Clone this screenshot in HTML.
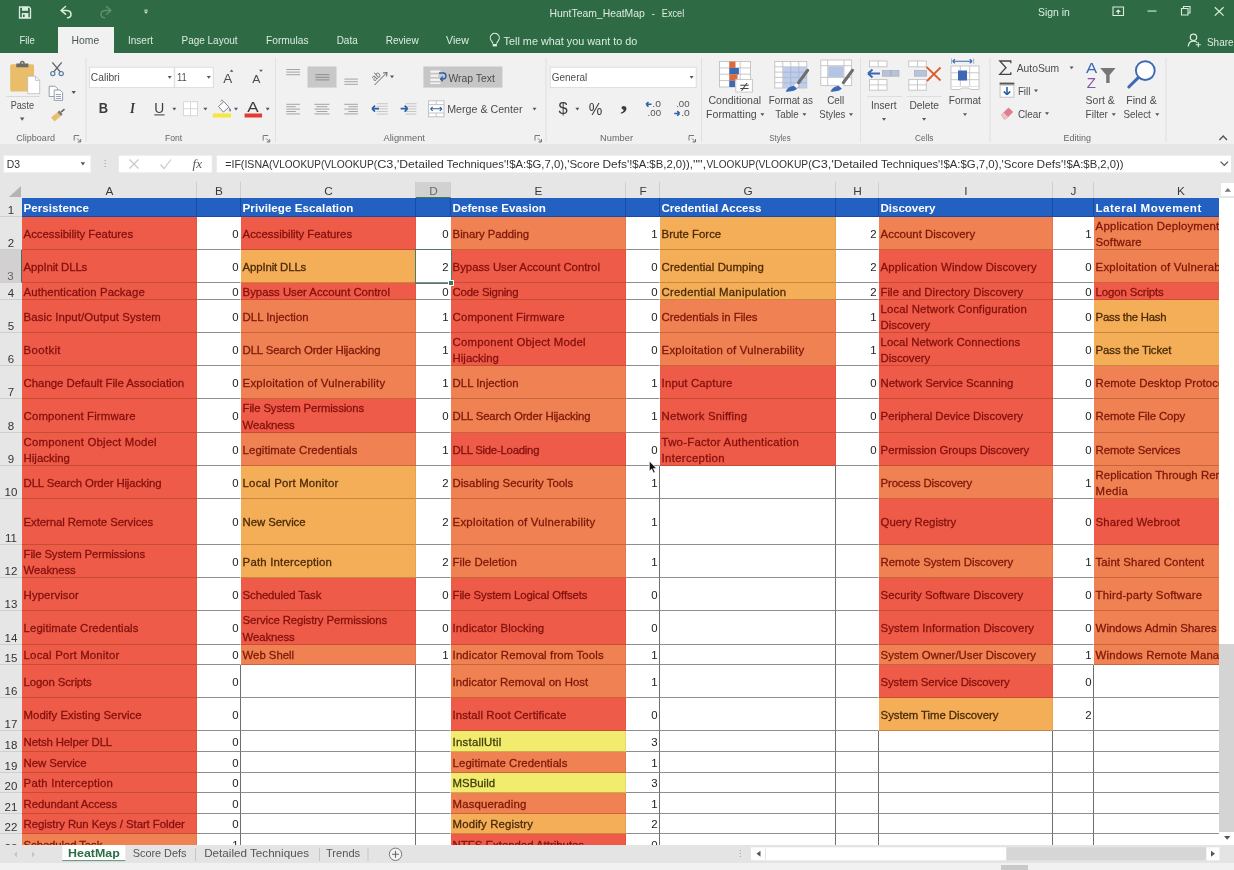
<!DOCTYPE html>
<html><head><meta charset="utf-8"><title>HuntTeam_HeatMap - Excel</title>
<style>
*{box-sizing:border-box;margin:0;padding:0}
html,body{width:1234px;height:870px;overflow:hidden;background:#f1f1f1;font-family:"Liberation Sans",sans-serif;}
.abs{position:absolute;will-change:transform}
#title{left:0;top:0;width:1234px;height:53px;background:#2c6b45}
#title .t{position:absolute;color:#fff;font-size:11.5px;white-space:nowrap}
#hometab{left:58px;top:27px;width:56px;height:27px;background:#f1f1f1}
#ribbon{left:0;top:53px;width:1234px;height:95px;background:#f1f1f1}
.rl{position:absolute;font-size:11px;color:#444;white-space:nowrap}
.gl{position:absolute;font-size:10.5px;color:#555;white-space:nowrap;top:132px}
.vsep{position:absolute;top:58px;width:1px;height:84px;background:#dcdcdc}
#fbar{left:0;top:148px;width:1234px;height:34px;background:#e9e9e9}
#grid{left:0;top:182px;width:1234px;height:663px;background:#fff;overflow:hidden}
.c{position:absolute;overflow:hidden;font-size:11.4px;white-space:nowrap;border-right:1px solid #6e6e6e;border-bottom:1px solid #8e8e8e;display:flex;align-items:center}
.c.cf{border-bottom-color:rgba(110,40,0,.3);border-right-color:rgba(100,0,0,.08)}
.c.nr{border-right-color:transparent}
.c.t span{padding-left:1.6px;line-height:16.5px;position:relative;top:1px;-webkit-text-stroke:0.3px currentColor}
.c.n{justify-content:flex-end;color:#222}
.c.n span{padding-right:1.5px;position:relative;top:0.75px}
.c.h{font-weight:700;font-size:11.6px;border-color:#1b4aa6}
.c.h span{padding-left:1.5px}
.c i{font-style:normal}
.ch{position:absolute;top:0;height:16px;font-size:11.8px;color:#3a3a3a;text-align:center;line-height:18.5px;padding-left:1px;border-right:1px solid #cfcfcf}
.rh{position:absolute;left:0;width:22px;font-size:11.5px;color:#333;text-align:center;border-bottom:1px solid #cfcfcf;display:flex;align-items:flex-end;justify-content:center}
</style></head><body>
<svg class="abs" style="left:0;top:0" width="1234" height="182" viewBox="0 0 1234 182">
<rect x="0" y="0" width="1234" height="53" fill="#2e6b45" />
<rect x="0" y="53" width="1234" height="91" fill="#f1f1f1" />
<rect x="0" y="144" width="1234" height="38" fill="#e6e6e6" />
<rect x="58" y="27" width="56" height="27" fill="#f1f1f1" />
<path d="M19.5 7 H29 L30.5 8.5 V18 H19.5 Z" fill="none" stroke="#dcecdf" stroke-width="1.3" />
<rect x="22" y="7" width="6" height="3.8" fill="#dcecdf" />
<rect x="21.8" y="13" width="6.6" height="5" fill="#dcecdf" />
<rect x="23" y="14.5" width="1.6" height="2.5" fill="#2e6b45" />
<path d="M61 10.5 L65.5 6.5 M61 10.5 L65.5 14.2 M61 10.5 H67 Q71 10.8 71 14.5 Q71 17.5 67.5 17.8" fill="none" stroke="#dcecdf" stroke-width="1.5" stroke-linecap="round" stroke-linejoin="round"/>
<path d="M111 10.5 L106.5 6.5 M111 10.5 L106.5 14.2 M111 10.5 H105 Q101 10.8 101 14.5 Q101 17.5 104.5 17.8" fill="none" stroke="#5f8f72" stroke-width="1.4" stroke-linecap="round" stroke-linejoin="round"/>
<rect x="144.3" y="9.6" width="3.4" height="1" fill="#dcecdf" />
<path d="M144 11.5 H148 L146 13.8 Z" fill="#dcecdf" />
<text x="549.5" y="17" font-family="Liberation Sans" font-size="10.4" fill="#dcecdf" font-weight="400" text-anchor="start" textLength="95.3" lengthAdjust="spacingAndGlyphs" >HuntTeam_HeatMap</text>
<text x="651.5" y="17" font-family="Liberation Sans" font-size="10.4" fill="#dcecdf" font-weight="400" text-anchor="start" >-</text>
<text x="661.8" y="17" font-family="Liberation Sans" font-size="10.4" fill="#dcecdf" font-weight="400" text-anchor="start" textLength="22.4" lengthAdjust="spacingAndGlyphs" >Excel</text>
<text x="1038" y="15.6" font-family="Liberation Sans" font-size="10.4" fill="#dcecdf" font-weight="400" text-anchor="start" textLength="31.8" lengthAdjust="spacingAndGlyphs" >Sign in</text>
<path d="M1113 7 H1123.5 V15.5 H1113 Z" fill="none" stroke="#dcecdf" stroke-width="1.1" />
<path d="M1118.2 9.2 L1120.8 12 H1115.6 Z" fill="#dcecdf" />
<rect x="1117.6" y="11.5" width="1.2" height="2.6" fill="#dcecdf" />
<rect x="1147.5" y="10.5" width="9" height="1.1" fill="#dcecdf" />
<path d="M1181.5 8.5 H1188 V15 H1181.5 Z" fill="none" stroke="#dcecdf" stroke-width="1.1" />
<path d="M1183.5 8.5 V6.5 H1190 V13 H1188" fill="none" stroke="#dcecdf" stroke-width="1.1" />
<path d="M1214.8 7.2 L1223.6 15.6 M1223.6 7.2 L1214.8 15.6" fill="none" stroke="#dcecdf" stroke-width="1.2" />
<text x="19.4" y="44.3" font-family="Liberation Sans" font-size="10.4" fill="#dcecdf" font-weight="400" text-anchor="start" textLength="15.4" lengthAdjust="spacingAndGlyphs" >File</text>
<text x="71.6" y="44.3" font-family="Liberation Sans" font-size="10.4" fill="#4a5a50" font-weight="400" text-anchor="start" textLength="27.6" lengthAdjust="spacingAndGlyphs" >Home</text>
<text x="128" y="44.3" font-family="Liberation Sans" font-size="10.4" fill="#dcecdf" font-weight="400" text-anchor="start" textLength="25" lengthAdjust="spacingAndGlyphs" >Insert</text>
<text x="181.5" y="44.3" font-family="Liberation Sans" font-size="10.4" fill="#dcecdf" font-weight="400" text-anchor="start" textLength="56" lengthAdjust="spacingAndGlyphs" >Page Layout</text>
<text x="266" y="44.3" font-family="Liberation Sans" font-size="10.4" fill="#dcecdf" font-weight="400" text-anchor="start" textLength="42.5" lengthAdjust="spacingAndGlyphs" >Formulas</text>
<text x="336.7" y="44.3" font-family="Liberation Sans" font-size="10.4" fill="#dcecdf" font-weight="400" text-anchor="start" textLength="21" lengthAdjust="spacingAndGlyphs" >Data</text>
<text x="385.7" y="44.3" font-family="Liberation Sans" font-size="10.4" fill="#dcecdf" font-weight="400" text-anchor="start" textLength="33" lengthAdjust="spacingAndGlyphs" >Review</text>
<text x="446" y="44.3" font-family="Liberation Sans" font-size="10.4" fill="#dcecdf" font-weight="400" text-anchor="start" textLength="22.8" lengthAdjust="spacingAndGlyphs" >View</text>
<path d="M492.9 43.8 Q492.7 42.2 491.4 40.8 A4.5 4.5 0 1 1 498.2 40.8 Q496.9 42.2 496.7 43.8" fill="none" stroke="#dcecdf" stroke-width="1.1" />
<rect x="492.7" y="44" width="4.2" height="2.4" fill="#dcecdf" />
<text x="503.6" y="45" font-family="Liberation Sans" font-size="10.4" fill="#dcecdf" font-weight="400" text-anchor="start" textLength="133.7" lengthAdjust="spacingAndGlyphs" >Tell me what you want to do</text>
<circle cx="1193.5" cy="37.3" r="3.2" fill="none" stroke="#dcecdf" stroke-width="1.2"/>
<path d="M1188.3 46.5 Q1188.5 41.2 1193.5 41.2 Q1196 41.2 1197.2 42.6" fill="none" stroke="#dcecdf" stroke-width="1.2" />
<path d="M1198.3 42.2 V47.2 M1195.8 44.7 H1200.8" fill="none" stroke="#dcecdf" stroke-width="1.1" />
<text x="1207" y="45.5" font-family="Liberation Sans" font-size="10.4" fill="#dcecdf" font-weight="400" text-anchor="start" textLength="26.5" lengthAdjust="spacingAndGlyphs" >Share</text>
<rect x="85.5" y="58" width="1" height="84" fill="#e0e0e0" />
<rect x="275" y="58" width="1" height="84" fill="#e0e0e0" />
<rect x="545.5" y="58" width="1" height="84" fill="#e0e0e0" />
<rect x="701" y="58" width="1" height="84" fill="#e0e0e0" />
<rect x="860" y="58" width="1" height="84" fill="#e0e0e0" />
<rect x="989.5" y="58" width="1" height="84" fill="#e0e0e0" />
<rect x="1165.5" y="58" width="1" height="84" fill="#e0e0e0" />
<rect x="10.2" y="64.2" width="23.8" height="27.2" fill="#e9bd6a" rx="1.5"/>
<path d="M16.3 67.2 V63.6 H19.8 Q20 60.8 22.3 60.8 Q24.6 60.8 24.8 63.6 H28.4 V67.2 Z" fill="#6a6a6a" />
<circle cx="22.3" cy="63" r="1" fill="#e9bd6a"/>
<path d="M27.7 76.2 H35.5 L39.7 80.4 V93.7 H27.7 Z" fill="#fff" stroke="#b9b9b9" stroke-width="0.8" />
<path d="M35.5 76.2 V80.4 H39.7" fill="none" stroke="#b9b9b9" stroke-width="0.8" />
<rect x="6.4" y="96" width="33.3" height="1" fill="#d8d8d8" />
<text x="10.7" y="109.1" font-family="Liberation Sans" font-size="10.5" fill="#4c4c4c" font-weight="400" text-anchor="start" textLength="23.3" lengthAdjust="spacingAndGlyphs" >Paste</text>
<path d="M20.0 117.60000000000001 L24.4 117.60000000000001 L22.2 120.68 Z" fill="#555" />
<path d="M52.3 62.3 L60.3 72 M61.7 62.3 L53.7 72" fill="none" stroke="#5f6670" stroke-width="1.3" />
<circle cx="52.8" cy="73.6" r="2.1" fill="none" stroke="#5b78a8" stroke-width="1.2"/>
<circle cx="61.2" cy="73.6" r="2.1" fill="none" stroke="#5b78a8" stroke-width="1.2"/>
<path d="M49.2 86.2 H55 L57.5 88.7 V96.5 H49.2 Z" fill="#fdfdfd" stroke="#8d93a0" stroke-width="0.9" />
<path d="M54.2 90 H60 L62.6 92.6 V100.4 H54.2 Z" fill="#fdfdfd" stroke="#8d93a0" stroke-width="0.9" />
<path d="M55.8 94.5 H61 M55.8 96.5 H61 M55.8 98.5 H61" fill="none" stroke="#7c8fb5" stroke-width="0.8" />
<path d="M71.5 90.9 L75.9 90.9 L73.7 93.98 Z" fill="#555" />
<path d="M51 117.5 L57.5 112.2 L61 116 L54.5 121.5 Z" fill="#e9bd6a" />
<path d="M57.5 112.2 L59.3 110.6 L62.6 114.3 L61 116 Z" fill="#777" />
<path d="M61 112.2 L64.5 109.2" fill="none" stroke="#666" stroke-width="1.6" />
<text x="16.3" y="141.2" font-family="Liberation Sans" font-size="9.2" fill="#666" font-weight="400" text-anchor="start" textLength="38.6" lengthAdjust="spacingAndGlyphs" >Clipboard</text>
<path d="M74.2 140.5 L74.2 135.5 L79.2 135.5" fill="none" stroke="#777" stroke-width="1" />
<path d="M77.2 138.5 L80.7 142.0 M80.7 139.0 L80.7 142.0 L77.7 142.0" fill="none" stroke="#777" stroke-width="1" />
<rect x="89.6" y="67.2" width="84.7" height="20.4" fill="#fff" stroke="#dcdcdc" stroke-width="1"/>
<rect x="174.7" y="67.2" width="38.6" height="20.4" fill="#fff" stroke="#dcdcdc" stroke-width="1"/>
<text x="90.8" y="81.2" font-family="Liberation Sans" font-size="10.3" fill="#4c4c4c" font-weight="400" text-anchor="start" textLength="29" lengthAdjust="spacingAndGlyphs" >Calibri</text>
<path d="M167.7 75.9 L171.7 75.9 L169.7 78.7 Z" fill="#555" />
<text x="177" y="81.2" font-family="Liberation Sans" font-size="10.3" fill="#4c4c4c" font-weight="400" text-anchor="start" textLength="9.8" lengthAdjust="spacingAndGlyphs" >11</text>
<path d="M206.8 75.9 L210.8 75.9 L208.8 78.7 Z" fill="#555" />
<text x="223.3" y="82.6" font-family="Liberation Sans" font-size="12.5" fill="#4c4c4c" font-weight="400" text-anchor="start" textLength="9" lengthAdjust="spacingAndGlyphs" >A</text>
<path d="M229.8 71.8 L231.6 69.6 L233.4 71.8 Z" fill="#555" />
<text x="252.3" y="82.6" font-family="Liberation Sans" font-size="11.2" fill="#4c4c4c" font-weight="400" text-anchor="start" textLength="8.2" lengthAdjust="spacingAndGlyphs" >A</text>
<path d="M259.2 69.8 L262.8 69.8 L261 72 Z" fill="#555" />
<text x="98.7" y="113" font-family="Liberation Sans" font-size="15.2" fill="#3c3c3c" font-weight="700" text-anchor="start" textLength="9.3" lengthAdjust="spacingAndGlyphs" >B</text>
<text x="130" y="113" font-family="Liberation Serif" font-size="15.2" fill="#3c3c3c" font-weight="700" text-anchor="start" textLength="5" lengthAdjust="spacingAndGlyphs" font-style="italic">I</text>
<text x="154.3" y="112.6" font-family="Liberation Sans" font-size="14.6" fill="#3c3c3c" font-weight="400" text-anchor="start" textLength="10" lengthAdjust="spacingAndGlyphs" >U</text>
<rect x="154.3" y="114.4" width="10.2" height="1" fill="#3c3c3c" />
<path d="M172.3 107.7 L176.3 107.7 L174.3 110.5 Z" fill="#555" />
<rect x="183.5" y="101.7" width="14" height="14" fill="#fff" stroke="#d8d8d8" stroke-width="1"/>
<path d="M190.5 101.7 V115.7 M183.5 108.7 H197.5" fill="none" stroke="#d8d8d8" stroke-width="1" />
<path d="M203.4 107.7 L207.4 107.7 L205.4 110.5 Z" fill="#555" />
<path d="M218.5 106.5 L223.8 101.6 L229 107.2 L223.4 112 Z" fill="#fdfdfd" stroke="#777" stroke-width="0.9" />
<path d="M220.5 101.2 Q221.5 99.2 223.4 101.2" fill="none" stroke="#777" stroke-width="0.9" />
<path d="M229.6 107.5 Q231.8 110.5 230.3 111.6 Q228.6 111.6 229.6 107.5 Z" fill="#4d6fa3" />
<rect x="212.8" y="113.5" width="18.2" height="4" fill="#f5e73c" />
<path d="M234 107.7 L238 107.7 L236 110.5 Z" fill="#555" />
<text x="247.3" y="112.3" font-family="Liberation Sans" font-size="14.2" fill="#3c3c3c" font-weight="400" text-anchor="start" textLength="11.4" lengthAdjust="spacingAndGlyphs" >A</text>
<rect x="244.6" y="113.5" width="17.4" height="4" fill="#e53935" />
<path d="M265.7 107.7 L269.7 107.7 L267.7 110.5 Z" fill="#555" />
<text x="165" y="141.2" font-family="Liberation Sans" font-size="9.2" fill="#666" font-weight="400" text-anchor="start" textLength="17.2" lengthAdjust="spacingAndGlyphs" >Font</text>
<path d="M263.2 140.5 L263.2 135.5 L268.2 135.5" fill="none" stroke="#777" stroke-width="1" />
<path d="M266.2 138.5 L269.7 142.0 M269.7 139.0 L269.7 142.0 L266.7 142.0" fill="none" stroke="#777" stroke-width="1" />
<rect x="286.3" y="69.0" width="13.8" height="1" fill="#a4a4a4" />
<rect x="286.3" y="71.6" width="13.8" height="1" fill="#a4a4a4" />
<rect x="286.3" y="74.2" width="13.8" height="1" fill="#a4a4a4" />
<rect x="307.5" y="66.5" width="29" height="21.1" fill="#c8c8c8" />
<rect x="315.4" y="74.2" width="14" height="1" fill="#8a8a8a" />
<rect x="315.4" y="76.8" width="14" height="1" fill="#8a8a8a" />
<rect x="315.4" y="79.4" width="14" height="1" fill="#8a8a8a" />
<rect x="344.3" y="78.6" width="13.6" height="1" fill="#a4a4a4" />
<rect x="344.3" y="81.2" width="13.6" height="1" fill="#a4a4a4" />
<rect x="344.3" y="83.8" width="13.6" height="1" fill="#a4a4a4" />
<text x="372" y="79.5" font-family="Liberation Sans" font-size="9.5" fill="#666" font-weight="400" text-anchor="start" textLength="9" lengthAdjust="spacingAndGlyphs" transform="rotate(-40 376 77)">ab</text>
<path d="M374.5 85 L387 72.5 M387 72.5 L383 73 M387 72.5 L386.6 76.5" fill="none" stroke="#666" stroke-width="1" />
<path d="M390 75.5 L394 75.5 L392 78.3 Z" fill="#555" />
<rect x="423.4" y="66.5" width="79" height="21.1" fill="#c6c6c6" />
<rect x="430.4" y="70.5" width="10" height="2.2" fill="#f4f4f4" />
<rect x="430.4" y="74.6" width="8" height="2.2" fill="#f4f4f4" />
<rect x="430.4" y="78.7" width="10" height="2.2" fill="#f4f4f4" />
<rect x="430.4" y="82.5" width="10" height="1.5" fill="#f4f4f4" />
<path d="M439 73 H443.5 Q446 73.2 446 76 Q446 79 443 79 H441 M442.8 76.8 L440.6 79 L442.8 81.2" fill="none" stroke="#2f5fa8" stroke-width="1.4" />
<text x="448.4" y="81.6" font-family="Liberation Sans" font-size="10.3" fill="#4c4c4c" font-weight="400" text-anchor="start" textLength="46.5" lengthAdjust="spacingAndGlyphs" >Wrap Text</text>
<rect x="286.3" y="103.8" width="13.6" height="1" fill="#a4a4a4" />
<rect x="286.3" y="106.2" width="9.5" height="1" fill="#a4a4a4" />
<rect x="286.3" y="108.6" width="13.6" height="1" fill="#a4a4a4" />
<rect x="286.3" y="111.0" width="9.5" height="1" fill="#a4a4a4" />
<rect x="286.3" y="113.4" width="13.6" height="1" fill="#a4a4a4" />
<rect x="314.4" y="103.8" width="15" height="1" fill="#a4a4a4" />
<rect x="316.4" y="106.2" width="11" height="1" fill="#a4a4a4" />
<rect x="314.4" y="108.6" width="15" height="1" fill="#a4a4a4" />
<rect x="316.4" y="111.0" width="11" height="1" fill="#a4a4a4" />
<rect x="314.4" y="113.4" width="15" height="1" fill="#a4a4a4" />
<rect x="344.3" y="103.8" width="13.6" height="1" fill="#a4a4a4" />
<rect x="348.4" y="106.2" width="9.5" height="1" fill="#a4a4a4" />
<rect x="344.3" y="108.6" width="13.6" height="1" fill="#a4a4a4" />
<rect x="348.4" y="111.0" width="9.5" height="1" fill="#a4a4a4" />
<rect x="344.3" y="113.4" width="13.6" height="1" fill="#a4a4a4" />
<rect x="376.7" y="103.2" width="11" height="1" fill="#c6c6c6" />
<rect x="376.7" y="105.8" width="11" height="1" fill="#c6c6c6" />
<rect x="376.7" y="108.4" width="11" height="1" fill="#c6c6c6" />
<rect x="376.7" y="111.0" width="11" height="1" fill="#c6c6c6" />
<rect x="376.7" y="113.6" width="11" height="1" fill="#c6c6c6" />
<path d="M372 108.6 H379 M372 108.6 L375 105.6 M372 108.6 L375 111.6" fill="none" stroke="#2f5fa8" stroke-width="1.6" />
<rect x="405.5" y="103.2" width="11" height="1" fill="#c6c6c6" />
<rect x="405.5" y="105.8" width="11" height="1" fill="#c6c6c6" />
<rect x="405.5" y="108.4" width="11" height="1" fill="#c6c6c6" />
<rect x="405.5" y="111.0" width="11" height="1" fill="#c6c6c6" />
<rect x="405.5" y="113.6" width="11" height="1" fill="#c6c6c6" />
<path d="M400.6 108.6 H407.6 M407.6 108.6 L404.6 105.6 M407.6 108.6 L404.6 111.6" fill="none" stroke="#2f5fa8" stroke-width="1.6" />
<rect x="428.5" y="100.8" width="15.5" height="16" fill="#fff" stroke="#bdbdbd" stroke-width="0.9"/>
<path d="M428.5 104.6 H444 M428.5 113 H444 M436.2 100.8 V104.6 M436.2 113 V116.8" fill="none" stroke="#bdbdbd" stroke-width="0.9" />
<path d="M430.5 108.8 H442 M430.5 108.8 L432.7 106.8 M430.5 108.8 L432.7 110.8 M442 108.8 L439.8 106.8 M442 108.8 L439.8 110.8" fill="none" stroke="#2f5fa8" stroke-width="1.1" />
<text x="447.2" y="113.4" font-family="Liberation Sans" font-size="10.3" fill="#4c4c4c" font-weight="400" text-anchor="start" textLength="75.3" lengthAdjust="spacingAndGlyphs" >Merge &amp; Center</text>
<path d="M532.5 107.7 L536.5 107.7 L534.5 110.5 Z" fill="#555" />
<text x="383.6" y="141.2" font-family="Liberation Sans" font-size="9.2" fill="#666" font-weight="400" text-anchor="start" textLength="41.3" lengthAdjust="spacingAndGlyphs" >Alignment</text>
<path d="M535 140.5 L535 135.5 L540 135.5" fill="none" stroke="#777" stroke-width="1" />
<path d="M538 138.5 L541.5 142.0 M541.5 139.0 L541.5 142.0 L538.5 142.0" fill="none" stroke="#777" stroke-width="1" />
<rect x="550.2" y="67.2" width="146" height="20.4" fill="#fff" stroke="#dcdcdc" stroke-width="1"/>
<text x="551.8" y="81.2" font-family="Liberation Sans" font-size="10.3" fill="#4c4c4c" font-weight="400" text-anchor="start" textLength="35.4" lengthAdjust="spacingAndGlyphs" >General</text>
<path d="M689.6 75.9 L693.6 75.9 L691.6 78.7 Z" fill="#555" />
<text x="558.6" y="114" font-family="Liberation Sans" font-size="16.5" fill="#3c3c3c" font-weight="400" text-anchor="start" textLength="9.2" lengthAdjust="spacingAndGlyphs" >$</text>
<path d="M575.4 107.7 L579.4 107.7 L577.4 110.5 Z" fill="#555" />
<text x="588.8" y="114.6" font-family="Liberation Sans" font-size="16" fill="#3c3c3c" font-weight="400" text-anchor="start" textLength="13.6" lengthAdjust="spacingAndGlyphs" >%</text>
<text x="620.5" y="110" font-family="Liberation Serif" font-size="26" fill="#3c3c3c" font-weight="700" text-anchor="start" textLength="7" lengthAdjust="spacingAndGlyphs" >,</text>
<path d="M646 104.3 H651.5 M646 104.3 L648.5 102 M646 104.3 L648.5 106.6" fill="none" stroke="#2f5fa8" stroke-width="1.5" />
<text x="652.3" y="107.2" font-family="Liberation Sans" font-size="8.8" fill="#555" font-weight="400" text-anchor="start" textLength="8.6" lengthAdjust="spacingAndGlyphs" >.0</text>
<text x="647.6" y="116.2" font-family="Liberation Sans" font-size="8.8" fill="#555" font-weight="400" text-anchor="start" textLength="13.4" lengthAdjust="spacingAndGlyphs" >.00</text>
<text x="676.2" y="107.2" font-family="Liberation Sans" font-size="8.8" fill="#555" font-weight="400" text-anchor="start" textLength="13.4" lengthAdjust="spacingAndGlyphs" >.00</text>
<path d="M674.2 113.4 H679.7 M679.7 113.4 L677.2 111.1 M679.7 113.4 L677.2 115.7" fill="none" stroke="#2f5fa8" stroke-width="1.5" />
<text x="681.2" y="116.2" font-family="Liberation Sans" font-size="8.8" fill="#555" font-weight="400" text-anchor="start" textLength="8.6" lengthAdjust="spacingAndGlyphs" >.0</text>
<text x="600.1" y="141.2" font-family="Liberation Sans" font-size="9.2" fill="#666" font-weight="400" text-anchor="start" textLength="32.9" lengthAdjust="spacingAndGlyphs" >Number</text>
<path d="M689 140.5 L689 135.5 L694 135.5" fill="none" stroke="#777" stroke-width="1" />
<path d="M692 138.5 L695.5 142.0 M695.5 139.0 L695.5 142.0 L692.5 142.0" fill="none" stroke="#777" stroke-width="1" />
<rect x="719.5" y="61.5" width="31" height="25.5" fill="#fff" stroke="#c2c2c2" stroke-width="0.9"/>
<path d="M729.8 61.5 V87.0 M740.2 61.5 V87.0 M719.5 67.9 H750.5 M719.5 74.2 H750.5 M719.5 80.6 H750.5 " fill="none" stroke="#c2c2c2" stroke-width="0.9" />
<rect x="729.3" y="61.5" width="6.2" height="6.4" fill="#dd6a3c" />
<rect x="729.3" y="67.9" width="9.6" height="6.4" fill="#3c68b4" />
<rect x="729.3" y="74.3" width="8.2" height="6.4" fill="#dd6a3c" />
<rect x="729.3" y="80.7" width="5.8" height="6.3" fill="#3c68b4" />
<rect x="735.8" y="79.5" width="16.6" height="12.6" fill="#fdfdfd" stroke="#c4c4c4" stroke-width="0.9"/>
<text x="739.6" y="90.6" font-family="Liberation Sans" font-size="13" fill="#444" font-weight="400" text-anchor="start" textLength="9.4" lengthAdjust="spacingAndGlyphs" >≠</text>
<text x="708.4" y="104.4" font-family="Liberation Sans" font-size="10.3" fill="#4c4c4c" font-weight="400" text-anchor="start" textLength="52.8" lengthAdjust="spacingAndGlyphs" >Conditional</text>
<text x="706.1" y="118.1" font-family="Liberation Sans" font-size="10.3" fill="#4c4c4c" font-weight="400" text-anchor="start" textLength="50.6" lengthAdjust="spacingAndGlyphs" >Formatting</text>
<path d="M760.4 113.3 L764.4 113.3 L762.4 116.1 Z" fill="#555" />
<rect x="774.8" y="61.5" width="32" height="26.5" fill="#fff" stroke="#c2c2c2" stroke-width="0.9"/>
<path d="M782.8 61.5 V88.0 M790.8 61.5 V88.0 M798.8 61.5 V88.0 M774.8 66.8 H806.8 M774.8 72.1 H806.8 M774.8 77.4 H806.8 M774.8 82.7 H806.8 " fill="none" stroke="#c2c2c2" stroke-width="0.9" />
<rect x="783" y="67" width="24" height="21" fill="#b4c4e4" fill-opacity="0.85"/>
<path d="M783 72.3 H807 M783 77.6 H807 M783 82.9 H807 M790.8 67 V88 M798.8 67 V88" fill="none" stroke="#a3b6dc" stroke-width="0.7" />
<path d="M807.6 70.4 L798.6 82.6" fill="none" stroke="#6e6e6e" stroke-width="3.2" stroke-linecap="round"/>
<circle cx="796.4" cy="85.39999999999999" r="2" fill="#f4f6fa"/>
<path d="M785.6 91.6 Q788.1 86.6 793.6 85.8 L797.0 88.6 Q795.1 92.0 785.6 91.6 Z" fill="#3c68b4" />
<text x="768.7" y="104.4" font-family="Liberation Sans" font-size="10.3" fill="#4c4c4c" font-weight="400" text-anchor="start" textLength="44.3" lengthAdjust="spacingAndGlyphs" >Format as</text>
<text x="775.3" y="118.1" font-family="Liberation Sans" font-size="10.3" fill="#4c4c4c" font-weight="400" text-anchor="start" textLength="23.4" lengthAdjust="spacingAndGlyphs" >Table</text>
<path d="M802.4 113.3 L806.4 113.3 L804.4 116.1 Z" fill="#555" />
<rect x="820.8" y="60" width="30.8" height="25.6" fill="#fff" stroke="#c2c2c2" stroke-width="0.9"/>
<path d="M827.7 60 V85.6 M844 60 V85.6 M820.8 65.7 H851.6 M820.8 77.4 H851.6" fill="none" stroke="#c2c2c2" stroke-width="0.9" />
<rect x="828.2" y="66.2" width="15.4" height="10.8" fill="#b4c4e4" />
<path d="M852.4 70.4 L843.4 82.6" fill="none" stroke="#6e6e6e" stroke-width="3.2" stroke-linecap="round"/>
<circle cx="841.1999999999999" cy="85.39999999999999" r="2" fill="#f4f6fa"/>
<path d="M830.4 91.6 Q832.9 86.6 838.4 85.8 L841.8 88.6 Q839.9 92.0 830.4 91.6 Z" fill="#3c68b4" />
<text x="827.2" y="104.4" font-family="Liberation Sans" font-size="10.3" fill="#4c4c4c" font-weight="400" text-anchor="start" textLength="17.1" lengthAdjust="spacingAndGlyphs" >Cell</text>
<text x="819.3" y="118.1" font-family="Liberation Sans" font-size="10.3" fill="#4c4c4c" font-weight="400" text-anchor="start" textLength="26.1" lengthAdjust="spacingAndGlyphs" >Styles</text>
<path d="M849 113.3 L853 113.3 L851 116.1 Z" fill="#555" />
<text x="769.2" y="141.2" font-family="Liberation Sans" font-size="9.2" fill="#666" font-weight="400" text-anchor="start" textLength="21.5" lengthAdjust="spacingAndGlyphs" >Styles</text>
<rect x="869.5" y="61" width="17.5" height="5.8" fill="#fff" stroke="#c2c2c2" stroke-width="0.9"/>
<path d="M878.2 61 V66.8 " fill="none" stroke="#c2c2c2" stroke-width="0.9" />
<rect x="869.5" y="79.6" width="17.5" height="10.6" fill="#fff" stroke="#c2c2c2" stroke-width="0.9"/>
<path d="M878.2 79.6 V90.19999999999999 M869.5 84.9 H887.0 " fill="none" stroke="#c2c2c2" stroke-width="0.9" />
<rect x="882.5" y="70.4" width="16.5" height="5.8" fill="#b9c3d6" stroke="#a9b3c6" stroke-width="0.8"/>
<rect x="890.5" y="70.4" width="0.8" height="5.8" fill="#98a2b6" />
<path d="M868 73.4 H880 M868 73.4 L872.5 69.4 M868 73.4 L872.5 77.4" fill="none" stroke="#3c68b4" stroke-width="2" />
<rect x="867" y="96" width="35" height="1" fill="#dedede" />
<text x="871" y="109.2" font-family="Liberation Sans" font-size="10.3" fill="#4c4c4c" font-weight="400" text-anchor="start" textLength="25.5" lengthAdjust="spacingAndGlyphs" >Insert</text>
<path d="M882 117.9 L886 117.9 L884 120.7 Z" fill="#555" />
<rect x="908.8" y="61" width="17.5" height="5.8" fill="#fff" stroke="#c2c2c2" stroke-width="0.9"/>
<path d="M917.5 61 V66.8 " fill="none" stroke="#c2c2c2" stroke-width="0.9" />
<rect x="908.8" y="79.6" width="17.5" height="10.6" fill="#fff" stroke="#c2c2c2" stroke-width="0.9"/>
<path d="M917.5 79.6 V90.19999999999999 M908.8 84.9 H926.3 " fill="none" stroke="#c2c2c2" stroke-width="0.9" />
<rect x="914.5" y="70.4" width="12" height="5.8" fill="#b9c3d6" stroke="#a9b3c6" stroke-width="0.8"/>
<path d="M926.5 67 L940.5 80.5 M940.5 67.5 L927 81" fill="none" stroke="#d8602e" stroke-width="1.8" />
<rect x="906.5" y="96" width="35" height="1" fill="#dedede" />
<text x="909.4" y="109.2" font-family="Liberation Sans" font-size="10.3" fill="#4c4c4c" font-weight="400" text-anchor="start" textLength="29.5" lengthAdjust="spacingAndGlyphs" >Delete</text>
<path d="M922.1 117.9 L926.1 117.9 L924.1 120.7 Z" fill="#555" />
<path d="M952.5 61.2 H972.2 M952.5 61.2 L955 59.2 M952.5 61.2 L955 63.2 M972.2 61.2 L969.7 59.2 M972.2 61.2 L969.7 63.2" fill="none" stroke="#3c68b4" stroke-width="1.1" />
<rect x="951" y="58.6" width="0.9" height="5.2" fill="#9aa8c8" />
<rect x="973.2" y="58.6" width="0.9" height="5.2" fill="#9aa8c8" />
<rect x="951" y="66" width="28" height="20.5" fill="#fff" stroke="#c2c2c2" stroke-width="0.9"/>
<path d="M960.3 66 V86.5 M969.7 66 V86.5 M951 72.8 H979 M951 79.7 H979 " fill="none" stroke="#c2c2c2" stroke-width="0.9" />
<rect x="958" y="70.5" width="9" height="10" fill="#3c68b4" />
<path d="M951 86.5 V89.5 H960 L962 88 H969 L971 89.5 H979 V86.5" fill="#fff" stroke="#c2c2c2" stroke-width="0.9" />
<text x="948.7" y="104.4" font-family="Liberation Sans" font-size="10.3" fill="#4c4c4c" font-weight="400" text-anchor="start" textLength="32.2" lengthAdjust="spacingAndGlyphs" >Format</text>
<path d="M963 113.3 L967 113.3 L965 116.1 Z" fill="#555" />
<text x="915.1" y="141.2" font-family="Liberation Sans" font-size="9.2" fill="#666" font-weight="400" text-anchor="start" textLength="18.4" lengthAdjust="spacingAndGlyphs" >Cells</text>
<path d="M1010.8 63.3 V61 H999.8 L1006 67.7 L999.8 74.4 H1010.8 V72.2" fill="none" stroke="#444" stroke-width="1.3" />
<text x="1016.7" y="71.7" font-family="Liberation Sans" font-size="10.3" fill="#4c4c4c" font-weight="400" text-anchor="start" textLength="42.5" lengthAdjust="spacingAndGlyphs" >AutoSum</text>
<path d="M1069.6 66.4 L1073.6 66.4 L1071.6 69.2 Z" fill="#555" />
<rect x="999.6" y="82.6" width="14.8" height="2" fill="#555" />
<rect x="1000.1" y="85.2" width="13.8" height="12" fill="#fff" stroke="#bdbdbd" stroke-width="0.9"/>
<path d="M1007 87 V94.5 M1007 94.8 L1003.8 91.4 M1007 94.8 L1010.2 91.4" fill="none" stroke="#2f5fa8" stroke-width="1.6" />
<text x="1017.9" y="94.9" font-family="Liberation Sans" font-size="10.3" fill="#4c4c4c" font-weight="400" text-anchor="start" textLength="12.5" lengthAdjust="spacingAndGlyphs" >Fill</text>
<path d="M1034 89.5 L1038 89.5 L1036 92.3 Z" fill="#555" />
<path d="M1001 115 L1008.5 107.6 L1013.2 112 L1006 119.2 H1003.8 Z" fill="#e27d8e" />
<path d="M1001 115 L1003.6 112.4 L1008.2 117 L1006 119.2 H1003.8 Z" fill="#ecc3c9" />
<text x="1017.9" y="117.6" font-family="Liberation Sans" font-size="10.3" fill="#4c4c4c" font-weight="400" text-anchor="start" textLength="23.8" lengthAdjust="spacingAndGlyphs" >Clear</text>
<path d="M1045 112.2 L1049 112.2 L1047 115.0 Z" fill="#555" />
<text x="1086" y="72.9" font-family="Liberation Sans" font-size="15" fill="#3c68b4" font-weight="400" text-anchor="start" textLength="11.2" lengthAdjust="spacingAndGlyphs" >A</text>
<text x="1086.7" y="87.8" font-family="Liberation Sans" font-size="15" fill="#8a55a8" font-weight="400" text-anchor="start" textLength="9.2" lengthAdjust="spacingAndGlyphs" >Z</text>
<path d="M1100.2 68 H1115.6 L1109.6 75 V83 H1106.2 V75 Z" fill="#777" />
<text x="1085.6" y="104.4" font-family="Liberation Sans" font-size="10.3" fill="#4c4c4c" font-weight="400" text-anchor="start" textLength="29.1" lengthAdjust="spacingAndGlyphs" >Sort &amp;</text>
<text x="1085.6" y="118.1" font-family="Liberation Sans" font-size="10.3" fill="#4c4c4c" font-weight="400" text-anchor="start" textLength="22.3" lengthAdjust="spacingAndGlyphs" >Filter</text>
<path d="M1111.8 113.3 L1115.8 113.3 L1113.8 116.1 Z" fill="#555" />
<circle cx="1145.3" cy="70.6" r="9.4" fill="#fff" stroke="#3c68b4" stroke-width="1.9"/>
<path d="M1138.3 77.6 L1128.8 87" fill="none" stroke="#3c68b4" stroke-width="3" stroke-linecap="round"/>
<text x="1126.2" y="104.4" font-family="Liberation Sans" font-size="10.3" fill="#4c4c4c" font-weight="400" text-anchor="start" textLength="30.5" lengthAdjust="spacingAndGlyphs" >Find &amp;</text>
<text x="1123.6" y="118.1" font-family="Liberation Sans" font-size="10.3" fill="#4c4c4c" font-weight="400" text-anchor="start" textLength="27.2" lengthAdjust="spacingAndGlyphs" >Select</text>
<path d="M1155.3 113.3 L1159.3 113.3 L1157.3 116.1 Z" fill="#555" />
<text x="1063.6" y="141.2" font-family="Liberation Sans" font-size="9.2" fill="#666" font-weight="400" text-anchor="start" textLength="27.5" lengthAdjust="spacingAndGlyphs" >Editing</text>
<path d="M1219.4 140 L1223.2 136 L1227 140" fill="none" stroke="#555" stroke-width="1.4" />
<rect x="3.8" y="155.6" width="86.7" height="16.8" fill="#fff" />
<text x="6.8" y="168.4" font-family="Liberation Sans" font-size="10.8" fill="#333" font-weight="400" text-anchor="start" textLength="13.3" lengthAdjust="spacingAndGlyphs" >D3</text>
<path d="M80.7 162.3 L85.10000000000001 162.3 L82.9 165.38 Z" fill="#555" />
<rect x="104.6" y="160" width="1" height="1" fill="#999" />
<rect x="104.6" y="163" width="1" height="1" fill="#999" />
<rect x="104.6" y="166" width="1" height="1" fill="#999" />
<rect x="118.8" y="155.6" width="93" height="16.8" fill="#fff" />
<path d="M129.5 159.5 L138.5 168.5 M138.5 159.5 L129.5 168.5" fill="none" stroke="#c8c8c8" stroke-width="1.2" />
<path d="M160.5 164.5 L164 168.5 L171 159.5" fill="none" stroke="#c8c8c8" stroke-width="1.2" />
<text x="192.5" y="168.3" font-family="Liberation Serif" font-size="12.5" fill="#555" font-weight="400" text-anchor="start" textLength="9.5" lengthAdjust="spacingAndGlyphs" font-style="italic">fx</text>
<rect x="216.8" y="155.6" width="1014.2" height="16.8" fill="#fff" />
<text x="225.3" y="168.3" font-family="Liberation Sans" font-size="10.6" fill="#333" font-weight="400" text-anchor="start" textLength="47.3" lengthAdjust="spacingAndGlyphs" >=IF(ISNA(</text>
<text x="272.6" y="168.3" font-family="Liberation Sans" font-size="10.6" fill="#333" font-weight="400" text-anchor="start" textLength="51.7" lengthAdjust="spacingAndGlyphs" >VLOOKUP(</text>
<text x="324.3" y="168.3" font-family="Liberation Sans" font-size="10.6" fill="#333" font-weight="400" text-anchor="start" textLength="52.9" lengthAdjust="spacingAndGlyphs" >VLOOKUP(</text>
<text x="377.2" y="168.3" font-family="Liberation Sans" font-size="10.6" fill="#333" font-weight="400" text-anchor="start" textLength="19.8" lengthAdjust="spacingAndGlyphs" >C3,</text>
<text x="397" y="168.3" font-family="Liberation Sans" font-size="10.6" fill="#333" font-weight="400" text-anchor="start" textLength="46.8" lengthAdjust="spacingAndGlyphs" >&#x27;Detailed</text>
<text x="446.6" y="168.3" font-family="Liberation Sans" font-size="10.6" fill="#333" font-weight="400" text-anchor="start" textLength="59.5" lengthAdjust="spacingAndGlyphs" >Techniques&#x27;</text>
<text x="506.1" y="168.3" font-family="Liberation Sans" font-size="10.6" fill="#333" font-weight="400" text-anchor="start" textLength="61.1" lengthAdjust="spacingAndGlyphs" >!$A:$G,7,0),</text>
<text x="567.2" y="168.3" font-family="Liberation Sans" font-size="10.6" fill="#333" font-weight="400" text-anchor="start" textLength="32.4" lengthAdjust="spacingAndGlyphs" >&#x27;Score</text>
<text x="602.4" y="168.3" font-family="Liberation Sans" font-size="10.6" fill="#333" font-weight="400" text-anchor="start" textLength="26.8" lengthAdjust="spacingAndGlyphs" >Defs&#x27;</text>
<text x="629.2" y="168.3" font-family="Liberation Sans" font-size="10.6" fill="#333" font-weight="400" text-anchor="start" textLength="63.7" lengthAdjust="spacingAndGlyphs" >!$A:$B,2,0)),</text>
<text x="692.9" y="168.3" font-family="Liberation Sans" font-size="10.6" fill="#333" font-weight="400" text-anchor="start" textLength="13.5" lengthAdjust="spacingAndGlyphs" >&quot;&quot;,</text>
<text x="706.4" y="168.3" font-family="Liberation Sans" font-size="10.6" fill="#333" font-weight="400" text-anchor="start" textLength="52.1" lengthAdjust="spacingAndGlyphs" >VLOOKUP(</text>
<text x="758.5" y="168.3" font-family="Liberation Sans" font-size="10.6" fill="#333" font-weight="400" text-anchor="start" textLength="53.1" lengthAdjust="spacingAndGlyphs" >VLOOKUP(</text>
<text x="811.6" y="168.3" font-family="Liberation Sans" font-size="10.6" fill="#333" font-weight="400" text-anchor="start" textLength="19.8" lengthAdjust="spacingAndGlyphs" >C3,</text>
<text x="831.4" y="168.3" font-family="Liberation Sans" font-size="10.6" fill="#333" font-weight="400" text-anchor="start" textLength="46.7" lengthAdjust="spacingAndGlyphs" >&#x27;Detailed</text>
<text x="880.9" y="168.3" font-family="Liberation Sans" font-size="10.6" fill="#333" font-weight="400" text-anchor="start" textLength="59.4" lengthAdjust="spacingAndGlyphs" >Techniques&#x27;</text>
<text x="940.3" y="168.3" font-family="Liberation Sans" font-size="10.6" fill="#333" font-weight="400" text-anchor="start" textLength="61.3" lengthAdjust="spacingAndGlyphs" >!$A:$G,7,0),</text>
<text x="1001.6" y="168.3" font-family="Liberation Sans" font-size="10.6" fill="#333" font-weight="400" text-anchor="start" textLength="32.2" lengthAdjust="spacingAndGlyphs" >&#x27;Score</text>
<text x="1036.6" y="168.3" font-family="Liberation Sans" font-size="10.6" fill="#333" font-weight="400" text-anchor="start" textLength="26.7" lengthAdjust="spacingAndGlyphs" >Defs&#x27;</text>
<text x="1063.3" y="168.3" font-family="Liberation Sans" font-size="10.6" fill="#333" font-weight="400" text-anchor="start" textLength="60.2" lengthAdjust="spacingAndGlyphs" >!$A:$B,2,0))</text>
<path d="M1220.6 161.6 L1224.3 165.4 L1228 161.6" fill="none" stroke="#555" stroke-width="1.3" />
</svg>
<div class="abs" id="grid">
<div style="position:absolute;left:0;top:-182px;width:1234px;height:870px">
<div style="position:absolute;left:0;top:182px;width:1234px;height:16.2px;background:#e6e6e6"></div>
<div style="position:absolute;left:0;top:198px;width:22px;height:647px;background:#e6e6e6"></div>
<svg style="position:absolute;left:8px;top:184.6px" width="14" height="13"><path d="M13 1 L13 12 L1 12 Z" fill="#b4b4b4"/></svg>
<div class="ch" style="left:22px;top:182px;width:175px;">A</div>
<div class="ch" style="left:197px;top:182px;width:44px;">B</div>
<div class="ch" style="left:241px;top:182px;width:175px;">C</div>
<div class="ch" style="left:416px;top:182px;width:35px;background:#d2d0d0;color:#5f6f66;border-bottom:1px solid #3f7a58;height:16px;">D</div>
<div class="ch" style="left:451px;top:182px;width:175px;">E</div>
<div class="ch" style="left:626px;top:182px;width:34px;">F</div>
<div class="ch" style="left:660px;top:182px;width:176px;">G</div>
<div class="ch" style="left:836px;top:182px;width:43px;">H</div>
<div class="ch" style="left:879px;top:182px;width:174px;">I</div>
<div class="ch" style="left:1053px;top:182px;width:41px;">J</div>
<div class="ch" style="left:1094px;top:182px;width:173px;border-right:none;">K</div>
<div class="rh" style="top:198px;height:19px;"><span>1</span></div>
<div class="rh" style="top:217px;height:33px;"><span>2</span></div>
<div class="rh" style="top:250px;height:33px;background:#d2d0d0;color:#666;border-right:1px solid #4a6a58;"><span>3</span></div>
<div class="rh" style="top:283px;height:17px;"><span>4</span></div>
<div class="rh" style="top:300px;height:33px;"><span>5</span></div>
<div class="rh" style="top:333px;height:33px;"><span>6</span></div>
<div class="rh" style="top:366px;height:33px;"><span>7</span></div>
<div class="rh" style="top:399px;height:34px;"><span>8</span></div>
<div class="rh" style="top:433px;height:33px;"><span>9</span></div>
<div class="rh" style="top:466px;height:33px;"><span>10</span></div>
<div class="rh" style="top:499px;height:46px;"><span>11</span></div>
<div class="rh" style="top:545px;height:33px;"><span>12</span></div>
<div class="rh" style="top:578px;height:33px;"><span>13</span></div>
<div class="rh" style="top:611px;height:34px;"><span>14</span></div>
<div class="rh" style="top:645px;height:20px;"><span>15</span></div>
<div class="rh" style="top:665px;height:33px;"><span>16</span></div>
<div class="rh" style="top:698px;height:33px;"><span>17</span></div>
<div class="rh" style="top:731px;height:21px;"><span>18</span></div>
<div class="rh" style="top:752px;height:21px;"><span>19</span></div>
<div class="rh" style="top:773px;height:20px;"><span>20</span></div>
<div class="rh" style="top:793px;height:21px;"><span>21</span></div>
<div class="rh" style="top:814px;height:20px;"><span>22</span></div>
<div class="rh" style="top:834px;height:21px;"><span>23</span></div>
<div class="c h" style="left:22px;top:198px;width:175px;height:19px;background:#2260c2;color:#fff;"><span><i style="letter-spacing:0.04px">Persistence</i></span></div>
<div class="c h" style="left:197px;top:198px;width:44px;height:19px;background:#2260c2;color:#fff;"></div>
<div class="c h" style="left:241px;top:198px;width:175px;height:19px;background:#2260c2;color:#fff;"><span><i style="letter-spacing:0.07px">Privilege Escalation</i></span></div>
<div class="c h" style="left:416px;top:198px;width:35px;height:19px;background:#2260c2;color:#fff;"></div>
<div class="c h" style="left:451px;top:198px;width:175px;height:19px;background:#2260c2;color:#fff;"><span><i style="letter-spacing:0.04px">Defense Evasion</i></span></div>
<div class="c h" style="left:626px;top:198px;width:34px;height:19px;background:#2260c2;color:#fff;"></div>
<div class="c h" style="left:660px;top:198px;width:176px;height:19px;background:#2260c2;color:#fff;"><span><i style="letter-spacing:-0.01px">Credential Access</i></span></div>
<div class="c h" style="left:836px;top:198px;width:43px;height:19px;background:#2260c2;color:#fff;"></div>
<div class="c h" style="left:879px;top:198px;width:174px;height:19px;background:#2260c2;color:#fff;"><span><i style="letter-spacing:-0.05px">Discovery</i></span></div>
<div class="c h" style="left:1053px;top:198px;width:41px;height:19px;background:#2260c2;color:#fff;"></div>
<div class="c h" style="left:1094px;top:198px;width:126px;height:19px;background:#2260c2;color:#fff;"><span><i style="letter-spacing:0.48px">Lateral Movement</i></span></div>
<div class="c t cf" style="left:22px;top:217px;width:175px;height:33px;background:#ee5c49;color:#84100c;"><span><i style="letter-spacing:-0.03px">Accessibility Features</i></span></div>
<div class="c n nr" style="left:197px;top:217px;width:44px;height:33px;"><span>0</span></div>
<div class="c t cf" style="left:241px;top:217px;width:175px;height:33px;background:#ee5c49;color:#84100c;"><span><i style="letter-spacing:-0.03px">Accessibility Features</i></span></div>
<div class="c n nr" style="left:416px;top:217px;width:35px;height:33px;"><span>0</span></div>
<div class="c t cf" style="left:451px;top:217px;width:175px;height:33px;background:#f08152;color:#7c180a;"><span><i style="letter-spacing:-0.05px">Binary Padding</i></span></div>
<div class="c n nr" style="left:626px;top:217px;width:34px;height:33px;"><span>1</span></div>
<div class="c t cf" style="left:660px;top:217px;width:176px;height:33px;background:#f4ae58;color:#4c2a08;"><span><i style="letter-spacing:0.01px">Brute Force</i></span></div>
<div class="c n nr" style="left:836px;top:217px;width:43px;height:33px;"><span>2</span></div>
<div class="c t cf" style="left:879px;top:217px;width:174px;height:33px;background:#f08152;color:#7c180a;"><span><i style="letter-spacing:0.01px">Account Discovery</i></span></div>
<div class="c n nr" style="left:1053px;top:217px;width:41px;height:33px;"><span>1</span></div>
<div class="c t cf" style="left:1094px;top:217px;width:126px;height:33px;background:#f08152;color:#7c180a;"><span><i style="letter-spacing:0.19px">Application Deployment</i><br><i style="letter-spacing:0.16px">Software</i></span></div>
<div class="c t cf" style="left:22px;top:250px;width:175px;height:33px;background:#ee5c49;color:#84100c;"><span><i style="letter-spacing:-0.14px">AppInit DLLs</i></span></div>
<div class="c n nr" style="left:197px;top:250px;width:44px;height:33px;"><span>0</span></div>
<div class="c t cf" style="left:241px;top:250px;width:175px;height:33px;background:#f4ae58;color:#4c2a08;"><span><i style="letter-spacing:-0.14px">AppInit DLLs</i></span></div>
<div class="c n nr" style="left:416px;top:250px;width:35px;height:33px;"><span>2</span></div>
<div class="c t cf" style="left:451px;top:250px;width:175px;height:33px;background:#ee5c49;color:#84100c;"><span><i style="letter-spacing:-0.03px">Bypass User Account Control</i></span></div>
<div class="c n nr" style="left:626px;top:250px;width:34px;height:33px;"><span>0</span></div>
<div class="c t cf" style="left:660px;top:250px;width:176px;height:33px;background:#f4ae58;color:#4c2a08;"><span><i style="letter-spacing:0.09px">Credential Dumping</i></span></div>
<div class="c n nr" style="left:836px;top:250px;width:43px;height:33px;"><span>2</span></div>
<div class="c t cf" style="left:879px;top:250px;width:174px;height:33px;background:#ee5c49;color:#84100c;"><span><i style="letter-spacing:0.13px">Application Window Discovery</i></span></div>
<div class="c n nr" style="left:1053px;top:250px;width:41px;height:33px;"><span>0</span></div>
<div class="c t cf" style="left:1094px;top:250px;width:126px;height:33px;background:#f08152;color:#7c180a;"><span><i style="letter-spacing:0.22px">Exploitation of Vulnerability</i></span></div>
<div class="c t cf" style="left:22px;top:283px;width:175px;height:17px;background:#ee5c49;color:#84100c;"><span><i style="letter-spacing:0.07px">Authentication Package</i></span></div>
<div class="c n nr" style="left:197px;top:283px;width:44px;height:17px;"><span>0</span></div>
<div class="c t cf" style="left:241px;top:283px;width:175px;height:17px;background:#ee5c49;color:#84100c;"><span><i style="letter-spacing:-0.03px">Bypass User Account Control</i></span></div>
<div class="c n nr" style="left:416px;top:283px;width:35px;height:17px;"><span>0</span></div>
<div class="c t cf" style="left:451px;top:283px;width:175px;height:17px;background:#ee5c49;color:#84100c;"><span><i style="letter-spacing:-0.22px">Code Signing</i></span></div>
<div class="c n nr" style="left:626px;top:283px;width:34px;height:17px;"><span>0</span></div>
<div class="c t cf" style="left:660px;top:283px;width:176px;height:17px;background:#f4ae58;color:#4c2a08;"><span><i style="letter-spacing:0.22px">Credential Manipulation</i></span></div>
<div class="c n nr" style="left:836px;top:283px;width:43px;height:17px;"><span>2</span></div>
<div class="c t cf" style="left:879px;top:283px;width:174px;height:17px;background:#ee5c49;color:#84100c;"><span><i style="letter-spacing:0.01px">File and Directory Discovery</i></span></div>
<div class="c n nr" style="left:1053px;top:283px;width:41px;height:17px;"><span>0</span></div>
<div class="c t cf" style="left:1094px;top:283px;width:126px;height:17px;background:#ee5c49;color:#84100c;"><span><i style="letter-spacing:-0.12px">Logon Scripts</i></span></div>
<div class="c t cf" style="left:22px;top:300px;width:175px;height:33px;background:#ee5c49;color:#84100c;"><span><i style="letter-spacing:0.10px">Basic Input/Output System</i></span></div>
<div class="c n nr" style="left:197px;top:300px;width:44px;height:33px;"><span>0</span></div>
<div class="c t cf" style="left:241px;top:300px;width:175px;height:33px;background:#f08152;color:#7c180a;"><span><i style="letter-spacing:-0.01px">DLL Injection</i></span></div>
<div class="c n nr" style="left:416px;top:300px;width:35px;height:33px;"><span>1</span></div>
<div class="c t cf" style="left:451px;top:300px;width:175px;height:33px;background:#ee5c49;color:#84100c;"><span><i style="letter-spacing:0.14px">Component Firmware</i></span></div>
<div class="c n nr" style="left:626px;top:300px;width:34px;height:33px;"><span>0</span></div>
<div class="c t cf" style="left:660px;top:300px;width:176px;height:33px;background:#f08152;color:#7c180a;"><span><i style="letter-spacing:-0.05px">Credentials in Files</i></span></div>
<div class="c n nr" style="left:836px;top:300px;width:43px;height:33px;"><span>1</span></div>
<div class="c t cf" style="left:879px;top:300px;width:174px;height:33px;background:#ee5c49;color:#84100c;"><span><i style="letter-spacing:0.12px">Local Network Configuration</i><br><i style="letter-spacing:-0.05px">Discovery</i></span></div>
<div class="c n nr" style="left:1053px;top:300px;width:41px;height:33px;"><span>0</span></div>
<div class="c t cf" style="left:1094px;top:300px;width:126px;height:33px;background:#f4ae58;color:#4c2a08;"><span><i style="letter-spacing:-0.26px">Pass the Hash</i></span></div>
<div class="c t cf" style="left:22px;top:333px;width:175px;height:33px;background:#ee5c49;color:#84100c;"><span><i style="letter-spacing:0.34px">Bootkit</i></span></div>
<div class="c n nr" style="left:197px;top:333px;width:44px;height:33px;"><span>0</span></div>
<div class="c t cf" style="left:241px;top:333px;width:175px;height:33px;background:#f08152;color:#7c180a;"><span><i style="letter-spacing:-0.14px">DLL Search Order Hijacking</i></span></div>
<div class="c n nr" style="left:416px;top:333px;width:35px;height:33px;"><span>1</span></div>
<div class="c t cf" style="left:451px;top:333px;width:175px;height:33px;background:#ee5c49;color:#84100c;"><span><i style="letter-spacing:0.18px">Component Object Model</i><br><i style="letter-spacing:0.01px">Hijacking</i></span></div>
<div class="c n nr" style="left:626px;top:333px;width:34px;height:33px;"><span>0</span></div>
<div class="c t cf" style="left:660px;top:333px;width:176px;height:33px;background:#f08152;color:#7c180a;"><span><i style="letter-spacing:0.22px">Exploitation of Vulnerability</i></span></div>
<div class="c n nr" style="left:836px;top:333px;width:43px;height:33px;"><span>1</span></div>
<div class="c t cf" style="left:879px;top:333px;width:174px;height:33px;background:#ee5c49;color:#84100c;"><span><i style="letter-spacing:0.04px">Local Network Connections</i><br><i style="letter-spacing:-0.05px">Discovery</i></span></div>
<div class="c n nr" style="left:1053px;top:333px;width:41px;height:33px;"><span>0</span></div>
<div class="c t cf" style="left:1094px;top:333px;width:126px;height:33px;background:#f4ae58;color:#4c2a08;"><span><i style="letter-spacing:-0.10px">Pass the Ticket</i></span></div>
<div class="c t cf" style="left:22px;top:366px;width:175px;height:33px;background:#ee5c49;color:#84100c;"><span><i style="letter-spacing:-0.03px">Change Default File Association</i></span></div>
<div class="c n nr" style="left:197px;top:366px;width:44px;height:33px;"><span>0</span></div>
<div class="c t cf" style="left:241px;top:366px;width:175px;height:33px;background:#f08152;color:#7c180a;"><span><i style="letter-spacing:0.22px">Exploitation of Vulnerability</i></span></div>
<div class="c n nr" style="left:416px;top:366px;width:35px;height:33px;"><span>1</span></div>
<div class="c t cf" style="left:451px;top:366px;width:175px;height:33px;background:#f08152;color:#7c180a;"><span><i style="letter-spacing:-0.01px">DLL Injection</i></span></div>
<div class="c n nr" style="left:626px;top:366px;width:34px;height:33px;"><span>1</span></div>
<div class="c t cf" style="left:660px;top:366px;width:176px;height:33px;background:#ee5c49;color:#84100c;"><span><i style="letter-spacing:0.15px">Input Capture</i></span></div>
<div class="c n nr" style="left:836px;top:366px;width:43px;height:33px;"><span>0</span></div>
<div class="c t cf" style="left:879px;top:366px;width:174px;height:33px;background:#ee5c49;color:#84100c;"><span><i style="letter-spacing:-0.04px">Network Service Scanning</i></span></div>
<div class="c n nr" style="left:1053px;top:366px;width:41px;height:33px;"><span>0</span></div>
<div class="c t cf" style="left:1094px;top:366px;width:126px;height:33px;background:#f08152;color:#7c180a;"><span><i style="letter-spacing:0.07px">Remote Desktop Protocol</i></span></div>
<div class="c t cf" style="left:22px;top:399px;width:175px;height:34px;background:#ee5c49;color:#84100c;"><span><i style="letter-spacing:0.14px">Component Firmware</i></span></div>
<div class="c n nr" style="left:197px;top:399px;width:44px;height:34px;"><span>0</span></div>
<div class="c t cf" style="left:241px;top:399px;width:175px;height:34px;background:#ee5c49;color:#84100c;"><span><i style="letter-spacing:-0.14px">File System Permissions</i><br><i style="letter-spacing:-0.12px">Weakness</i></span></div>
<div class="c n nr" style="left:416px;top:399px;width:35px;height:34px;"><span>0</span></div>
<div class="c t cf" style="left:451px;top:399px;width:175px;height:34px;background:#f08152;color:#7c180a;"><span><i style="letter-spacing:-0.14px">DLL Search Order Hijacking</i></span></div>
<div class="c n nr" style="left:626px;top:399px;width:34px;height:34px;"><span>1</span></div>
<div class="c t cf" style="left:660px;top:399px;width:176px;height:34px;background:#ee5c49;color:#84100c;"><span><i style="letter-spacing:0.18px">Network Sniffing</i></span></div>
<div class="c n nr" style="left:836px;top:399px;width:43px;height:34px;"><span>0</span></div>
<div class="c t cf" style="left:879px;top:399px;width:174px;height:34px;background:#ee5c49;color:#84100c;"><span><i style="letter-spacing:-0.03px">Peripheral Device Discovery</i></span></div>
<div class="c n nr" style="left:1053px;top:399px;width:41px;height:34px;"><span>0</span></div>
<div class="c t cf" style="left:1094px;top:399px;width:126px;height:34px;background:#f08152;color:#7c180a;"><span><i style="letter-spacing:-0.10px">Remote File Copy</i></span></div>
<div class="c t cf" style="left:22px;top:433px;width:175px;height:33px;background:#ee5c49;color:#84100c;"><span><i style="letter-spacing:0.18px">Component Object Model</i><br><i style="letter-spacing:0.01px">Hijacking</i></span></div>
<div class="c n nr" style="left:197px;top:433px;width:44px;height:33px;"><span>0</span></div>
<div class="c t cf" style="left:241px;top:433px;width:175px;height:33px;background:#f08152;color:#7c180a;"><span><i style="letter-spacing:0.07px">Legitimate Credentials</i></span></div>
<div class="c n nr" style="left:416px;top:433px;width:35px;height:33px;"><span>1</span></div>
<div class="c t cf" style="left:451px;top:433px;width:175px;height:33px;background:#ee5c49;color:#84100c;"><span><i style="letter-spacing:-0.26px">DLL Side-Loading</i></span></div>
<div class="c n nr" style="left:626px;top:433px;width:34px;height:33px;"><span>0</span></div>
<div class="c t cf" style="left:660px;top:433px;width:176px;height:33px;background:#ee5c49;color:#84100c;"><span><i style="letter-spacing:0.23px">Two-Factor Authentication</i><br><i style="letter-spacing:0.31px">Interception</i></span></div>
<div class="c n nr" style="left:836px;top:433px;width:43px;height:33px;"><span>0</span></div>
<div class="c t cf" style="left:879px;top:433px;width:174px;height:33px;background:#ee5c49;color:#84100c;"><span><i style="letter-spacing:-0.05px">Permission Groups Discovery</i></span></div>
<div class="c n nr" style="left:1053px;top:433px;width:41px;height:33px;"><span>0</span></div>
<div class="c t cf" style="left:1094px;top:433px;width:126px;height:33px;background:#f08152;color:#7c180a;"><span><i style="letter-spacing:-0.13px">Remote Services</i></span></div>
<div class="c t cf" style="left:22px;top:466px;width:175px;height:33px;background:#ee5c49;color:#84100c;"><span><i style="letter-spacing:-0.14px">DLL Search Order Hijacking</i></span></div>
<div class="c n nr" style="left:197px;top:466px;width:44px;height:33px;"><span>0</span></div>
<div class="c t cf" style="left:241px;top:466px;width:175px;height:33px;background:#f4ae58;color:#4c2a08;"><span><i style="letter-spacing:0.19px">Local Port Monitor</i></span></div>
<div class="c n nr" style="left:416px;top:466px;width:35px;height:33px;"><span>2</span></div>
<div class="c t cf" style="left:451px;top:466px;width:175px;height:33px;background:#f08152;color:#7c180a;"><span><i style="letter-spacing:0.00px">Disabling Security Tools</i></span></div>
<div class="c n" style="left:626px;top:466px;width:34px;height:33px;"><span>1</span></div>
<div class="c e" style="left:660px;top:466px;width:176px;height:33px;"></div>
<div class="c n nr" style="left:836px;top:466px;width:43px;height:33px;"></div>
<div class="c t cf" style="left:879px;top:466px;width:174px;height:33px;background:#f08152;color:#7c180a;"><span><i style="letter-spacing:-0.17px">Process Discovery</i></span></div>
<div class="c n nr" style="left:1053px;top:466px;width:41px;height:33px;"><span>1</span></div>
<div class="c t cf" style="left:1094px;top:466px;width:126px;height:33px;background:#f08152;color:#7c180a;"><span><i style="letter-spacing:0.02px">Replication Through Removable</i><br><i style="letter-spacing:0.31px">Media</i></span></div>
<div class="c t cf" style="left:22px;top:499px;width:175px;height:46px;background:#ee5c49;color:#84100c;"><span><i style="letter-spacing:-0.09px">External Remote Services</i></span></div>
<div class="c n nr" style="left:197px;top:499px;width:44px;height:46px;"><span>0</span></div>
<div class="c t cf" style="left:241px;top:499px;width:175px;height:46px;background:#f4ae58;color:#4c2a08;"><span><i style="letter-spacing:-0.10px">New Service</i></span></div>
<div class="c n nr" style="left:416px;top:499px;width:35px;height:46px;"><span>2</span></div>
<div class="c t cf" style="left:451px;top:499px;width:175px;height:46px;background:#f08152;color:#7c180a;"><span><i style="letter-spacing:0.22px">Exploitation of Vulnerability</i></span></div>
<div class="c n" style="left:626px;top:499px;width:34px;height:46px;"><span>1</span></div>
<div class="c e" style="left:660px;top:499px;width:176px;height:46px;"></div>
<div class="c n nr" style="left:836px;top:499px;width:43px;height:46px;"></div>
<div class="c t cf" style="left:879px;top:499px;width:174px;height:46px;background:#ee5c49;color:#84100c;"><span><i style="letter-spacing:-0.03px">Query Registry</i></span></div>
<div class="c n nr" style="left:1053px;top:499px;width:41px;height:46px;"><span>0</span></div>
<div class="c t cf" style="left:1094px;top:499px;width:126px;height:46px;background:#ee5c49;color:#84100c;"><span><i style="letter-spacing:0.13px">Shared Webroot</i></span></div>
<div class="c t cf" style="left:22px;top:545px;width:175px;height:33px;background:#ee5c49;color:#84100c;"><span><i style="letter-spacing:-0.14px">File System Permissions</i><br><i style="letter-spacing:-0.12px">Weakness</i></span></div>
<div class="c n nr" style="left:197px;top:545px;width:44px;height:33px;"><span>0</span></div>
<div class="c t cf" style="left:241px;top:545px;width:175px;height:33px;background:#f4ae58;color:#4c2a08;"><span><i style="letter-spacing:0.20px">Path Interception</i></span></div>
<div class="c n nr" style="left:416px;top:545px;width:35px;height:33px;"><span>2</span></div>
<div class="c t cf" style="left:451px;top:545px;width:175px;height:33px;background:#f08152;color:#7c180a;"><span><i style="letter-spacing:0.07px">File Deletion</i></span></div>
<div class="c n" style="left:626px;top:545px;width:34px;height:33px;"><span>1</span></div>
<div class="c e" style="left:660px;top:545px;width:176px;height:33px;"></div>
<div class="c n nr" style="left:836px;top:545px;width:43px;height:33px;"></div>
<div class="c t cf" style="left:879px;top:545px;width:174px;height:33px;background:#f08152;color:#7c180a;"><span><i style="letter-spacing:-0.07px">Remote System Discovery</i></span></div>
<div class="c n nr" style="left:1053px;top:545px;width:41px;height:33px;"><span>1</span></div>
<div class="c t cf" style="left:1094px;top:545px;width:126px;height:33px;background:#f08152;color:#7c180a;"><span><i style="letter-spacing:0.08px">Taint Shared Content</i></span></div>
<div class="c t cf" style="left:22px;top:578px;width:175px;height:33px;background:#ee5c49;color:#84100c;"><span><i style="letter-spacing:0.09px">Hypervisor</i></span></div>
<div class="c n nr" style="left:197px;top:578px;width:44px;height:33px;"><span>0</span></div>
<div class="c t cf" style="left:241px;top:578px;width:175px;height:33px;background:#ee5c49;color:#84100c;"><span><i style="letter-spacing:-0.11px">Scheduled Task</i></span></div>
<div class="c n nr" style="left:416px;top:578px;width:35px;height:33px;"><span>0</span></div>
<div class="c t cf" style="left:451px;top:578px;width:175px;height:33px;background:#ee5c49;color:#84100c;"><span><i style="letter-spacing:-0.11px">File System Logical Offsets</i></span></div>
<div class="c n" style="left:626px;top:578px;width:34px;height:33px;"><span>0</span></div>
<div class="c e" style="left:660px;top:578px;width:176px;height:33px;"></div>
<div class="c n nr" style="left:836px;top:578px;width:43px;height:33px;"></div>
<div class="c t cf" style="left:879px;top:578px;width:174px;height:33px;background:#ee5c49;color:#84100c;"><span><i style="letter-spacing:0.01px">Security Software Discovery</i></span></div>
<div class="c n nr" style="left:1053px;top:578px;width:41px;height:33px;"><span>0</span></div>
<div class="c t cf" style="left:1094px;top:578px;width:126px;height:33px;background:#f08152;color:#7c180a;"><span><i style="letter-spacing:0.17px">Third-party Software</i></span></div>
<div class="c t cf" style="left:22px;top:611px;width:175px;height:34px;background:#ee5c49;color:#84100c;"><span><i style="letter-spacing:0.07px">Legitimate Credentials</i></span></div>
<div class="c n nr" style="left:197px;top:611px;width:44px;height:34px;"><span>0</span></div>
<div class="c t cf" style="left:241px;top:611px;width:175px;height:34px;background:#ee5c49;color:#84100c;"><span><i style="letter-spacing:-0.13px">Service Registry Permissions</i><br><i style="letter-spacing:-0.12px">Weakness</i></span></div>
<div class="c n nr" style="left:416px;top:611px;width:35px;height:34px;"><span>0</span></div>
<div class="c t cf" style="left:451px;top:611px;width:175px;height:34px;background:#ee5c49;color:#84100c;"><span><i style="letter-spacing:0.10px">Indicator Blocking</i></span></div>
<div class="c n" style="left:626px;top:611px;width:34px;height:34px;"><span>0</span></div>
<div class="c e" style="left:660px;top:611px;width:176px;height:34px;"></div>
<div class="c n nr" style="left:836px;top:611px;width:43px;height:34px;"></div>
<div class="c t cf" style="left:879px;top:611px;width:174px;height:34px;background:#ee5c49;color:#84100c;"><span><i style="letter-spacing:0.08px">System Information Discovery</i></span></div>
<div class="c n nr" style="left:1053px;top:611px;width:41px;height:34px;"><span>0</span></div>
<div class="c t cf" style="left:1094px;top:611px;width:126px;height:34px;background:#f08152;color:#7c180a;"><span><i style="letter-spacing:0.04px">Windows Admin Shares</i></span></div>
<div class="c t cf" style="left:22px;top:645px;width:175px;height:20px;background:#ee5c49;color:#84100c;"><span><i style="letter-spacing:0.19px">Local Port Monitor</i></span></div>
<div class="c n nr" style="left:197px;top:645px;width:44px;height:20px;"><span>0</span></div>
<div class="c t cf" style="left:241px;top:645px;width:175px;height:20px;background:#f08152;color:#7c180a;"><span><i style="letter-spacing:-0.03px">Web Shell</i></span></div>
<div class="c n nr" style="left:416px;top:645px;width:35px;height:20px;"><span>1</span></div>
<div class="c t cf" style="left:451px;top:645px;width:175px;height:20px;background:#f08152;color:#7c180a;"><span><i style="letter-spacing:0.14px">Indicator Removal from Tools</i></span></div>
<div class="c n" style="left:626px;top:645px;width:34px;height:20px;"><span>1</span></div>
<div class="c e" style="left:660px;top:645px;width:176px;height:20px;"></div>
<div class="c n nr" style="left:836px;top:645px;width:43px;height:20px;"></div>
<div class="c t cf" style="left:879px;top:645px;width:174px;height:20px;background:#f08152;color:#7c180a;"><span><i style="letter-spacing:0.01px">System Owner/User Discovery</i></span></div>
<div class="c n nr" style="left:1053px;top:645px;width:41px;height:20px;"><span>1</span></div>
<div class="c t cf" style="left:1094px;top:645px;width:126px;height:20px;background:#f08152;color:#7c180a;"><span><i style="letter-spacing:0.15px">Windows Remote Management</i></span></div>
<div class="c t cf" style="left:22px;top:665px;width:175px;height:33px;background:#ee5c49;color:#84100c;"><span><i style="letter-spacing:-0.12px">Logon Scripts</i></span></div>
<div class="c n" style="left:197px;top:665px;width:44px;height:33px;"><span>0</span></div>
<div class="c e" style="left:241px;top:665px;width:175px;height:33px;"></div>
<div class="c n nr" style="left:416px;top:665px;width:35px;height:33px;"></div>
<div class="c t cf" style="left:451px;top:665px;width:175px;height:33px;background:#f08152;color:#7c180a;"><span><i style="letter-spacing:0.06px">Indicator Removal on Host</i></span></div>
<div class="c n" style="left:626px;top:665px;width:34px;height:33px;"><span>1</span></div>
<div class="c e" style="left:660px;top:665px;width:176px;height:33px;"></div>
<div class="c n nr" style="left:836px;top:665px;width:43px;height:33px;"></div>
<div class="c t cf" style="left:879px;top:665px;width:174px;height:33px;background:#ee5c49;color:#84100c;"><span><i style="letter-spacing:-0.14px">System Service Discovery</i></span></div>
<div class="c n" style="left:1053px;top:665px;width:41px;height:33px;"><span>0</span></div>
<div class="c e nr" style="left:1094px;top:665px;width:126px;height:33px;"></div>
<div class="c t cf" style="left:22px;top:698px;width:175px;height:33px;background:#ee5c49;color:#84100c;"><span><i style="letter-spacing:0.01px">Modify Existing Service</i></span></div>
<div class="c n" style="left:197px;top:698px;width:44px;height:33px;"><span>0</span></div>
<div class="c e" style="left:241px;top:698px;width:175px;height:33px;"></div>
<div class="c n nr" style="left:416px;top:698px;width:35px;height:33px;"></div>
<div class="c t cf" style="left:451px;top:698px;width:175px;height:33px;background:#ee5c49;color:#84100c;"><span><i style="letter-spacing:0.10px">Install Root Certificate</i></span></div>
<div class="c n" style="left:626px;top:698px;width:34px;height:33px;"><span>0</span></div>
<div class="c e" style="left:660px;top:698px;width:176px;height:33px;"></div>
<div class="c n nr" style="left:836px;top:698px;width:43px;height:33px;"></div>
<div class="c t cf" style="left:879px;top:698px;width:174px;height:33px;background:#f4ae58;color:#4c2a08;"><span><i style="letter-spacing:-0.06px">System Time Discovery</i></span></div>
<div class="c n" style="left:1053px;top:698px;width:41px;height:33px;"><span>2</span></div>
<div class="c e nr" style="left:1094px;top:698px;width:126px;height:33px;"></div>
<div class="c t cf" style="left:22px;top:731px;width:175px;height:21px;background:#ee5c49;color:#84100c;"><span><i style="letter-spacing:-0.13px">Netsh Helper DLL</i></span></div>
<div class="c n" style="left:197px;top:731px;width:44px;height:21px;"><span>0</span></div>
<div class="c e" style="left:241px;top:731px;width:175px;height:21px;"></div>
<div class="c n nr" style="left:416px;top:731px;width:35px;height:21px;"></div>
<div class="c t cf" style="left:451px;top:731px;width:175px;height:21px;background:#f1ec6e;color:#403f0a;"><span><i style="letter-spacing:0.24px">InstallUtil</i></span></div>
<div class="c n" style="left:626px;top:731px;width:34px;height:21px;"><span>3</span></div>
<div class="c e" style="left:660px;top:731px;width:176px;height:21px;"></div>
<div class="c n" style="left:836px;top:731px;width:43px;height:21px;"></div>
<div class="c e" style="left:879px;top:731px;width:174px;height:21px;"></div>
<div class="c n" style="left:1053px;top:731px;width:41px;height:21px;"></div>
<div class="c e nr" style="left:1094px;top:731px;width:126px;height:21px;"></div>
<div class="c t cf" style="left:22px;top:752px;width:175px;height:21px;background:#ee5c49;color:#84100c;"><span><i style="letter-spacing:-0.10px">New Service</i></span></div>
<div class="c n" style="left:197px;top:752px;width:44px;height:21px;"><span>0</span></div>
<div class="c e" style="left:241px;top:752px;width:175px;height:21px;"></div>
<div class="c n nr" style="left:416px;top:752px;width:35px;height:21px;"></div>
<div class="c t cf" style="left:451px;top:752px;width:175px;height:21px;background:#f08152;color:#7c180a;"><span><i style="letter-spacing:0.07px">Legitimate Credentials</i></span></div>
<div class="c n" style="left:626px;top:752px;width:34px;height:21px;"><span>1</span></div>
<div class="c e" style="left:660px;top:752px;width:176px;height:21px;"></div>
<div class="c n" style="left:836px;top:752px;width:43px;height:21px;"></div>
<div class="c e" style="left:879px;top:752px;width:174px;height:21px;"></div>
<div class="c n" style="left:1053px;top:752px;width:41px;height:21px;"></div>
<div class="c e nr" style="left:1094px;top:752px;width:126px;height:21px;"></div>
<div class="c t cf" style="left:22px;top:773px;width:175px;height:20px;background:#ee5c49;color:#84100c;"><span><i style="letter-spacing:0.20px">Path Interception</i></span></div>
<div class="c n" style="left:197px;top:773px;width:44px;height:20px;"><span>0</span></div>
<div class="c e" style="left:241px;top:773px;width:175px;height:20px;"></div>
<div class="c n nr" style="left:416px;top:773px;width:35px;height:20px;"></div>
<div class="c t cf" style="left:451px;top:773px;width:175px;height:20px;background:#f1ec6e;color:#403f0a;"><span><i style="letter-spacing:0.00px">MSBuild</i></span></div>
<div class="c n" style="left:626px;top:773px;width:34px;height:20px;"><span>3</span></div>
<div class="c e" style="left:660px;top:773px;width:176px;height:20px;"></div>
<div class="c n" style="left:836px;top:773px;width:43px;height:20px;"></div>
<div class="c e" style="left:879px;top:773px;width:174px;height:20px;"></div>
<div class="c n" style="left:1053px;top:773px;width:41px;height:20px;"></div>
<div class="c e nr" style="left:1094px;top:773px;width:126px;height:20px;"></div>
<div class="c t cf" style="left:22px;top:793px;width:175px;height:21px;background:#ee5c49;color:#84100c;"><span><i style="letter-spacing:-0.10px">Redundant Access</i></span></div>
<div class="c n" style="left:197px;top:793px;width:44px;height:21px;"><span>0</span></div>
<div class="c e" style="left:241px;top:793px;width:175px;height:21px;"></div>
<div class="c n nr" style="left:416px;top:793px;width:35px;height:21px;"></div>
<div class="c t cf" style="left:451px;top:793px;width:175px;height:21px;background:#f08152;color:#7c180a;"><span><i style="letter-spacing:0.13px">Masquerading</i></span></div>
<div class="c n" style="left:626px;top:793px;width:34px;height:21px;"><span>1</span></div>
<div class="c e" style="left:660px;top:793px;width:176px;height:21px;"></div>
<div class="c n" style="left:836px;top:793px;width:43px;height:21px;"></div>
<div class="c e" style="left:879px;top:793px;width:174px;height:21px;"></div>
<div class="c n" style="left:1053px;top:793px;width:41px;height:21px;"></div>
<div class="c e nr" style="left:1094px;top:793px;width:126px;height:21px;"></div>
<div class="c t cf" style="left:22px;top:814px;width:175px;height:20px;background:#ee5c49;color:#84100c;"><span><i style="letter-spacing:-0.07px">Registry Run Keys / Start Folder</i></span></div>
<div class="c n" style="left:197px;top:814px;width:44px;height:20px;"><span>0</span></div>
<div class="c e" style="left:241px;top:814px;width:175px;height:20px;"></div>
<div class="c n nr" style="left:416px;top:814px;width:35px;height:20px;"></div>
<div class="c t cf" style="left:451px;top:814px;width:175px;height:20px;background:#f4ae58;color:#4c2a08;"><span><i style="letter-spacing:0.13px">Modify Registry</i></span></div>
<div class="c n" style="left:626px;top:814px;width:34px;height:20px;"><span>2</span></div>
<div class="c e" style="left:660px;top:814px;width:176px;height:20px;"></div>
<div class="c n" style="left:836px;top:814px;width:43px;height:20px;"></div>
<div class="c e" style="left:879px;top:814px;width:174px;height:20px;"></div>
<div class="c n" style="left:1053px;top:814px;width:41px;height:20px;"></div>
<div class="c e nr" style="left:1094px;top:814px;width:126px;height:20px;"></div>
<div class="c t cf" style="left:22px;top:834px;width:175px;height:21px;background:#f08152;color:#7c180a;"><span><i style="letter-spacing:-0.11px">Scheduled Task</i></span></div>
<div class="c n" style="left:197px;top:834px;width:44px;height:21px;"><span>1</span></div>
<div class="c e" style="left:241px;top:834px;width:175px;height:21px;"></div>
<div class="c n nr" style="left:416px;top:834px;width:35px;height:21px;"></div>
<div class="c t cf" style="left:451px;top:834px;width:175px;height:21px;background:#ee5c49;color:#84100c;"><span><i style="letter-spacing:-0.01px">NTFS Extended Attributes</i></span></div>
<div class="c n" style="left:626px;top:834px;width:34px;height:21px;"><span>0</span></div>
<div class="c e" style="left:660px;top:834px;width:176px;height:21px;"></div>
<div class="c n" style="left:836px;top:834px;width:43px;height:21px;"></div>
<div class="c e" style="left:879px;top:834px;width:174px;height:21px;"></div>
<div class="c n" style="left:1053px;top:834px;width:41px;height:21px;"></div>
<div class="c e nr" style="left:1094px;top:834px;width:126px;height:21px;"></div>
<div style="position:absolute;left:414.5px;top:249px;width:37px;height:35px;border:1.3px solid #4d7c64"></div><div style="position:absolute;left:449px;top:281px;width:3.5px;height:3.5px;background:#3f7558;outline:0.7px solid #fff"></div>
<svg style="position:absolute;left:647px;top:459px" width="12" height="16" viewBox="0 0 12 16"><path d="M2.3 2 L2.3 12.2 L4.7 10 L6.5 14 L8.2 13.2 L6.4 9.4 L9.6 9.4 Z" fill="#111" stroke="#fff" stroke-width="0.7"/></svg>
</div>
</div>
<div class="abs" style="left:0;top:845px;width:1234px;height:18px;background:#e4e4e4"></div>
<div class="abs" style="left:0;top:863px;width:1234px;height:7px;background:#f1f1f1"></div>
<div class="abs" style="left:1001px;top:865px;width:27px;height:5px;background:#c9c9c9"></div>
<svg class="abs" style="left:0;top:845px" width="1234" height="18" viewBox="0 845 1234 18">
<path d="M17 851.5 L14 854.5 L17 857.5 Z M32 851.5 L35 854.5 L32 857.5 Z" fill="#c4c4c4"/>
<rect x="62.3" y="845" width="63" height="15.6" fill="#fff"/>
<rect x="62.3" y="860" width="63" height="1.1" fill="#6f9a82"/>
<text x="68" y="857.4" font-family="Liberation Sans" font-size="11.4" font-weight="700" fill="#2a6e46" textLength="51.8" lengthAdjust="spacingAndGlyphs">HeatMap</text>
<text x="132.7" y="857.4" font-family="Liberation Sans" font-size="11.4" fill="#555" textLength="53.8" lengthAdjust="spacingAndGlyphs">Score Defs</text>
<rect x="195" y="848" width="1" height="13" fill="#c6c6c6"/>
<text x="204.2" y="857.4" font-family="Liberation Sans" font-size="11.4" fill="#555" textLength="104.8" lengthAdjust="spacingAndGlyphs">Detailed Techniques</text>
<rect x="319" y="848" width="1" height="13" fill="#c6c6c6"/>
<text x="326" y="857.4" font-family="Liberation Sans" font-size="11.4" fill="#555" textLength="34.1" lengthAdjust="spacingAndGlyphs">Trends</text>
<rect x="367.5" y="848" width="1" height="13" fill="#c6c6c6"/>
<circle cx="395.5" cy="854.3" r="6.2" fill="#f4f4f4" stroke="#777" stroke-width="1"/>
<path d="M392 854.3 H399 M395.5 850.8 V857.8" stroke="#666" stroke-width="1.1"/>
<rect x="739.8" y="850" width="1" height="1" fill="#999"/><rect x="739.8" y="853" width="1" height="1" fill="#999"/><rect x="739.8" y="856" width="1" height="1" fill="#999"/>
<rect x="751" y="847.3" width="255.4" height="13" fill="#fff"/>
<rect x="1006.4" y="847.3" width="200" height="13" fill="#d6d6d6"/>
<rect x="1206.4" y="847.3" width="13" height="13" fill="#fff"/>
<rect x="765" y="847.3" width="0.8" height="13" fill="#e0e0e0"/>
<path d="M760.5 850.8 L756.5 853.8 L760.5 856.8 Z" fill="#555"/>
<path d="M1211 850.8 L1215 853.8 L1211 856.8 Z" fill="#555"/>
</svg>
<!-- vertical scrollbar -->
<div class="abs" style="left:1219px;top:182px;width:15px;height:663px;background:#fff"></div>
<div class="abs" style="left:1219px;top:182px;width:15px;height:16px;background:#e6e6e6"></div>
<div class="abs" style="left:1221px;top:183.2px;width:13px;height:13.2px;background:#fff"></div>
<div class="abs" style="left:1219px;top:644px;width:15px;height:188px;background:#d4d4d4"></div>
<svg class="abs" style="left:1220px;top:182px" width="14" height="663" viewBox="1220 182 14 663">
<path d="M1224.6 191.8 L1227.8 188 L1231 191.8 Z" fill="#777"/>
<path d="M1224 836 L1230.4 836 L1227.2 839.8 Z" fill="#555"/>
</svg>

</body></html>
